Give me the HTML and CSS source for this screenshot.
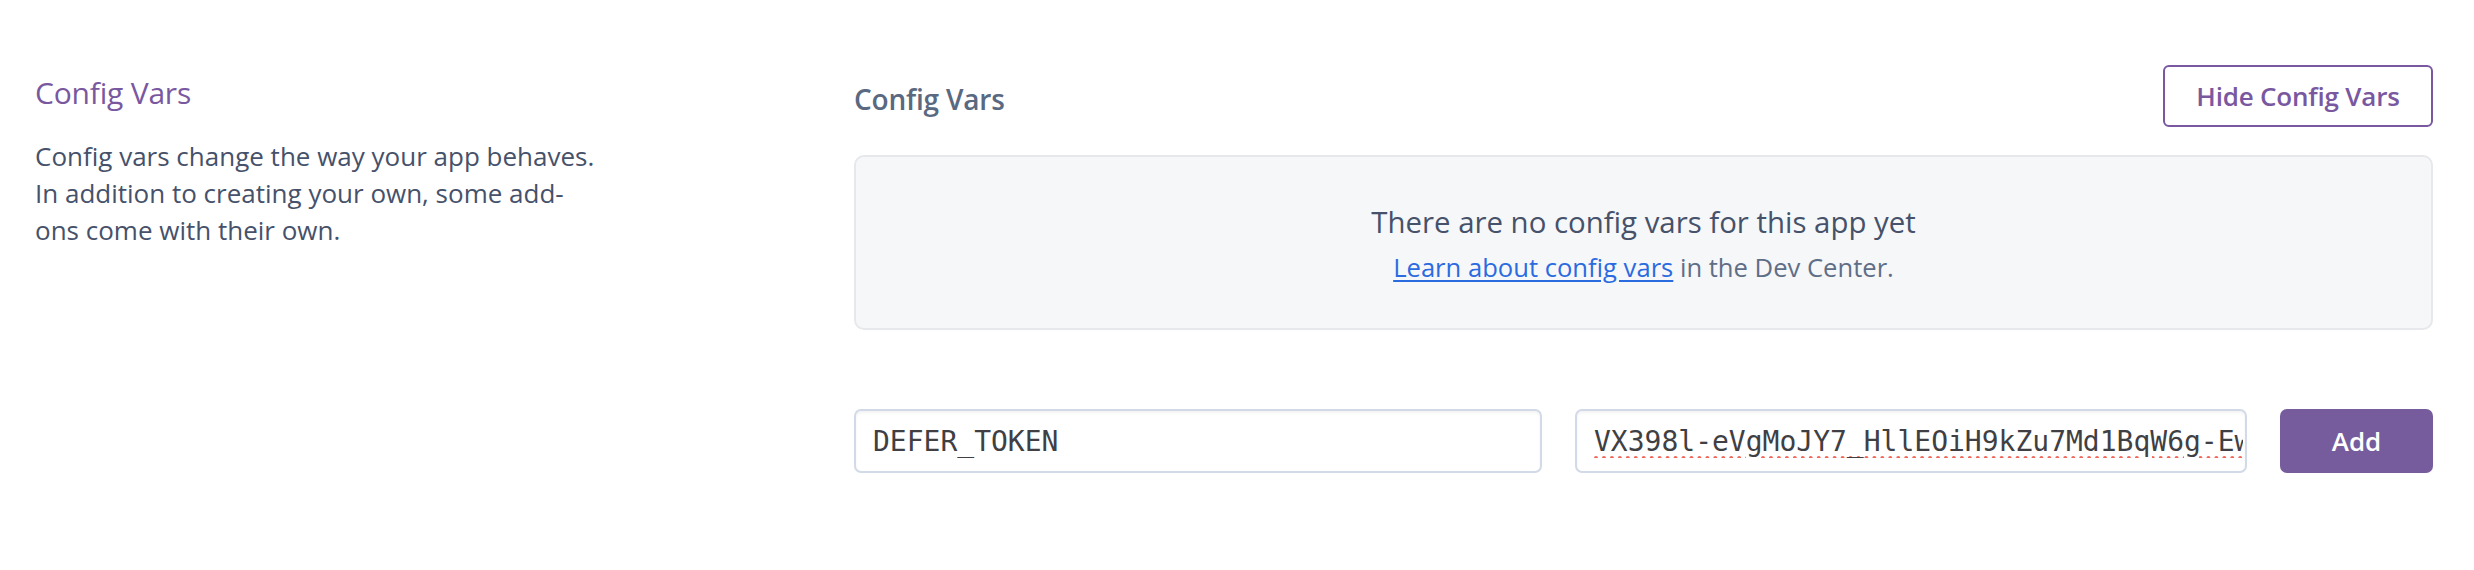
FILE: index.html
```html
<!DOCTYPE html>
<html lang="en">
<head>
<meta charset="utf-8">
<title>Config Vars</title>
<link rel="stylesheet" href="styles.css">
</head>
<body>
<section class="settings-section">
  <div class="section-intro">
    <h2 class="intro-title">Config Vars</h2>
    <p class="intro-copy">Config vars change the way your app behaves. In addition to creating your own, some add-ons come with their own.</p>
  </div>
  <div class="section-body">
    <div class="body-header">
      <h3 class="body-title">Config Vars</h3>
      <button class="btn-outline" type="button">Hide Config Vars</button>
    </div>
    <div class="empty-state">
      <p class="empty-title">There are no config vars for this app yet</p>
      <p class="empty-copy"><a class="empty-link" href="#">Learn about config vars</a> in the Dev Center.</p>
    </div>
    <form class="var-form">
      <input class="var-input" type="text" value="DEFER_TOKEN">
      <input class="var-input var-input-value" type="text" value="VX398l-eVgMoJY7_HllEOiH9kZu7Md1BqW6g-Ew">
      <button class="btn-primary" type="button">Add</button>
    </form>
  </div>
</section>
</body>
</html>
```

FILE: styles.css
```css
* { box-sizing: border-box; }

html, body {
  margin: 0;
  background: #ffffff;
}

body {
  font-family: "Open Sans", "Lato", sans-serif;
  color: #46516a;
}

.settings-section {
  display: flex;
  padding: 65px 41px 0 35px;
}

.section-intro {
  flex: none;
  width: 819px;
  padding-top: 10px;
}

.intro-title {
  margin: 0;
  font-size: 30px;
  line-height: 36px;
  font-weight: 400;
  color: #79589f;
  letter-spacing: -0.2px;
}

.intro-copy {
  margin: 27px 0 0;
  max-width: 566px;
  font-size: 26px;
  line-height: 37px;
  color: #46516a;
}

.section-body {
  flex: 1;
  min-width: 0;
}

.body-header {
  display: flex;
  align-items: center;
  justify-content: space-between;
  height: 62px;
}

.body-title {
  margin: 0;
  padding-top: 5px;
  font-size: 28px;
  font-weight: 600;
  color: #596981;
  letter-spacing: -0.2px;
}

.btn-outline {
  height: 62px;
  width: 270px;
  border: 2px solid #79589f;
  border-radius: 6px;
  background: #fff;
  color: #79589f;
  font-family: inherit;
  font-size: 26px;
  font-weight: 600;
  letter-spacing: -0.2px;
}

.empty-state {
  margin-top: 28px;
  height: 175px;
  border: 2px solid #e6e8eb;
  border-radius: 10px;
  background: #f6f7f9;
  text-align: center;
  padding-top: 45px;
}

.empty-title {
  margin: 0;
  font-size: 29.4px;
  line-height: 40px;
  color: #46516a;
}

.empty-copy {
  margin: 8px 0 0;
  font-size: 25.6px;
  line-height: 36px;
  color: #5f6e87;
}

.empty-link {
  color: #2b6be0;
  text-decoration: underline;
  text-underline-offset: 3px;
}

.var-form {
  margin: 79px 0 0;
  display: grid;
  grid-template-columns: 688px 672px 1fr;
  column-gap: 33px;
}

.var-input {
  height: 64px;
  padding: 0 2px 0 17px;
  border: 2px solid #d2d9e7;
  border-radius: 7px;
  box-shadow: inset 0 2px 3px rgba(0, 0, 0, 0.05);
  font-family: "DejaVu Sans Mono", monospace;
  font-size: 28px;
  color: #3f3f44;
  background: #fff;
  outline: none;
}

.var-input-value {
  text-decoration: underline dotted #f0675a;
  text-decoration-thickness: 4px;
  text-underline-offset: 6px;
}

.btn-primary {
  height: 64px;
  border: 0;
  border-radius: 7px;
  background: #765c9d;
  color: #fff;
  font-family: inherit;
  font-size: 26px;
  font-weight: 600;
}
```
